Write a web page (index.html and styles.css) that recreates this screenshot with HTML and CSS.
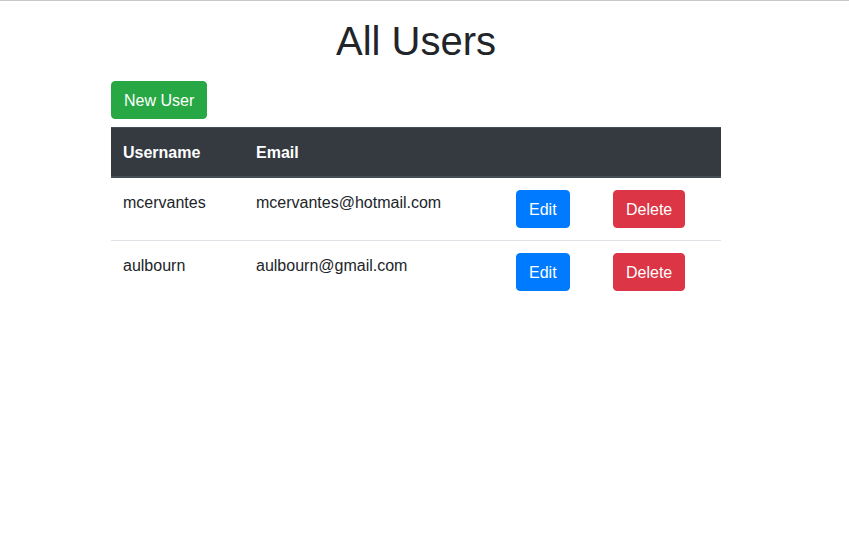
FILE: index.html
```html
<!DOCTYPE html>
<html lang="en">
<head>
<meta charset="utf-8">
<title>All Users</title>
<link rel="stylesheet" href="styles.css">
</head>
<body>
<div class="page">
  <div class="container">
    <h1 class="title">All Users</h1>
    <a class="btn btn-success" href="#">New User</a>
    <table class="table">
      <thead>
        <tr>
          <th class="col-user">Username</th>
          <th class="col-email">Email</th>
          <th class="col-edit"></th>
          <th class="col-delete"></th>
        </tr>
      </thead>
      <tbody>
        <tr>
          <td class="cell-text">mcervantes</td>
          <td class="cell-text">mcervantes@hotmail.com</td>
          <td><a class="btn btn-primary" href="#">Edit</a></td>
          <td><a class="btn btn-danger" href="#">Delete</a></td>
        </tr>
        <tr>
          <td class="cell-text">aulbourn</td>
          <td class="cell-text">aulbourn@gmail.com</td>
          <td><a class="btn btn-primary" href="#">Edit</a></td>
          <td><a class="btn btn-danger" href="#">Delete</a></td>
        </tr>
      </tbody>
    </table>
  </div>
</div>
</body>
</html>
```
FILE: styles.css
```css
* { box-sizing: border-box; }
html, body { margin: 0; padding: 0; }
body {
  font-family: "Liberation Sans", Arial, sans-serif;
  font-size: 16px;
  line-height: 1.5;
  color: #212529;
  background: #fff;
  border-top: 1px solid #c8c8c8;
}
.page {
  padding-right: 17px;
}
.container {
  width: 610px;
  margin: 0 auto;
}
.title {
  margin: 16px 0 16px;
  font-size: 40px;
  font-weight: 500;
  line-height: 1.2;
  text-align: center;
}
.btn {
  display: inline-block;
  padding: 7px 12px 5px;
  font-size: 16px;
  line-height: 24px;
  border: 1px solid transparent;
  border-radius: 4px;
  color: #fff;
  text-decoration: none;
  vertical-align: middle;
}
.btn-success { background: #28a745; border-color: #28a745; }
.btn-primary { background: #007bff; border-color: #007bff; }
.btn-danger { background: #dc3545; border-color: #dc3545; }
.table {
  width: 100%;
  margin-top: 8px;
  border-collapse: collapse;
  table-layout: fixed;
}
.col-user { width: 133px; }
.col-email { width: 260px; }
.col-edit { width: 97px; }
.col-delete { width: 120px; }
.table th, .table td {
  padding: 12px;
  vertical-align: top;
  text-align: left;
  border-top: 1px solid #dee2e6;
}
.table td.cell-text {
  padding: 13px 12px 11px;
}
.table thead th {
  padding: 13px 12px 11px;
  vertical-align: bottom;
  background: #343a40;
  color: #fff;
  font-weight: 700;
  border-top-color: #454d55;
  border-bottom: 2px solid #454d55;
}
```
